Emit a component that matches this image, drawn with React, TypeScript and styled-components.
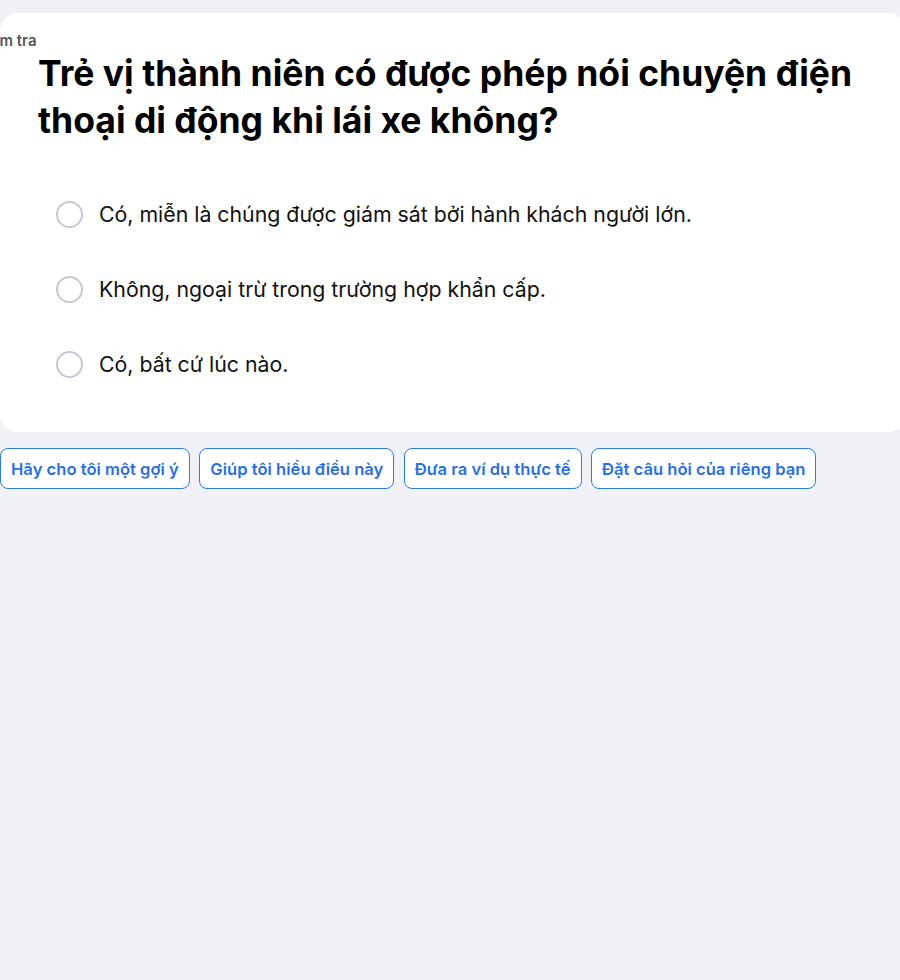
import React from "react";
import styled, { createGlobalStyle } from "styled-components";

const Global = createGlobalStyle`
  html, body { margin: 0; padding: 0; background: #f0f1f6; }
  body { font-family: Inter, "Noto Sans", sans-serif; overflow: hidden; }
`;

const Page = styled.div`
  width: 900px;
  height: 980px;
  padding-top: 13px;
  box-sizing: border-box;
  overflow: hidden;
`;

const Card = styled.section`
  width: 906px;
  height: 419px;
  background: #ffffff;
  border-radius: 18px;
  box-sizing: border-box;
  padding: 20px 0 0 38px;
  display: flex;
  flex-direction: column;
`;

const Label = styled.div`
  margin-left: -62px;
  font-size: 15px;
  font-weight: 600;
  color: #55555f;
  line-height: 16px;
`;

const Title = styled.h1`
  margin: 1px 0 0 0;
  font-size: 35.5px;
  line-height: 47px;
  font-weight: 700;
  color: #000;
  width: 840px;
`;

const Options = styled.div`
  margin-top: 56px;
  margin-left: 18px;
  display: flex;
  flex-direction: column;
  gap: 47px;
`;

const Option = styled.label`
  display: flex;
  align-items: center;
  gap: 16px;
  font-size: 21.3px;
  line-height: 28px;
  color: #111;
`;

const Radio = styled.span`
  width: 27px;
  height: 27px;
  border-radius: 50%;
  border: 2px solid #c6c6d4;
  box-sizing: border-box;
  flex: none;
`;

const Chips = styled.div`
  margin-top: 16px;
  display: flex;
  gap: 9.5px;
`;

const Chip = styled.button`
  height: 41px;
  padding: 0 10px;
  border: 1px solid #2c7be0;
  border-radius: 8px;
  background: #fff;
  color: #2b6fd9;
  font-family: Inter, "Noto Sans", sans-serif;
  font-size: 16.6px;
  font-weight: 600;
`;

const options = [
  "Có, miễn là chúng được giám sát bởi hành khách người lớn.",
  "Không, ngoại trừ trong trường hợp khẩn cấp.",
  "Có, bất cứ lúc nào.",
];

const chips = [
  "Hãy cho tôi một gợi ý",
  "Giúp tôi hiểu điều này",
  "Đưa ra ví dụ thực tế",
  "Đặt câu hỏi của riêng bạn",
];

export default function App() {
  return (
    <Page>
      <Global />
      <Card>
        <Label>Kiểm tra</Label>
        <Title>Trẻ vị thành niên có được phép nói chuyện điện thoại di động khi lái xe không?</Title>
        <Options>
          {options.map((o) => (
            <Option key={o}>
              <Radio />
              {o}
            </Option>
          ))}
        </Options>
      </Card>
      <Chips>
        {chips.map((c) => (
          <Chip key={c}>{c}</Chip>
        ))}
      </Chips>
    </Page>
  );
}
